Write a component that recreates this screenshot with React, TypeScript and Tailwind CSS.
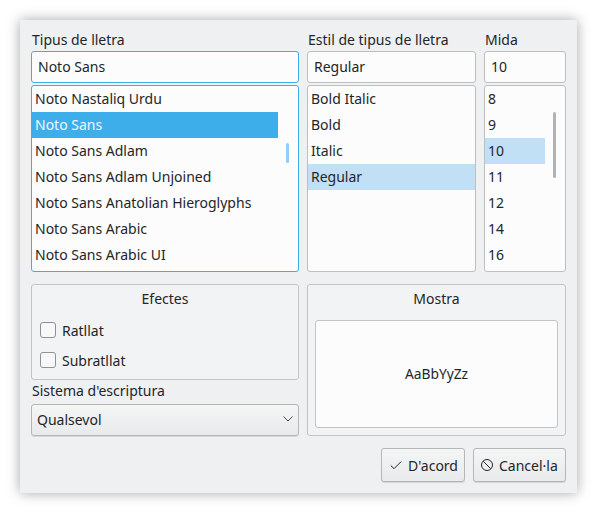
const families = [
  'Noto Nastaliq Urdu',
  'Noto Sans',
  'Noto Sans Adlam',
  'Noto Sans Adlam Unjoined',
  'Noto Sans Anatolian Hieroglyphs',
  'Noto Sans Arabic',
  'Noto Sans Arabic UI',
];
const styles = ['Bold Italic', 'Bold', 'Italic', 'Regular'];
const sizes = ['8', '9', '10', '11', '12', '14', '16'];

const ListRow = ({ text, active, current }: { text: string; active?: boolean; current?: boolean }) => (
  <div
    className={`h-[26px] pl-[3px] leading-[26px] whitespace-nowrap ${
      active ? 'bg-[#3daee9] text-[#eff8fd]' : current ? 'bg-[#c2e0f5]' : ''
    }`}
  >
    {text}
  </div>
);

const Input = ({ value, focused, pad }: { value: string; focused?: boolean; pad: string }) => (
  <div
    className={`h-[32px] rounded-[3px] border bg-[#fcfcfc] leading-[30px] ${pad} ${
      focused ? 'border-[#3daee9]' : 'border-[#bcbebf]'
    }`}
  >
    {value}
  </div>
);

const Check = ({ label }: { label: string }) => (
  <div className="flex h-[30px] items-center gap-[6px]">
    <div className="h-[16px] w-[16px] rounded-[3px] border border-[#8f9192] bg-[#f8f8f9]" />
    <span>{label}</span>
  </div>
);

export default function App() {
  return (
    <div className="h-[513px] w-[597px] bg-white pl-[20px] pt-[20px] font-['Noto_Sans',sans-serif] text-[14px] text-[#232629]">
      <div className="h-[473px] w-[557px] bg-[#eff0f1] px-[11px] pt-[11px] shadow-[0_0_12px_rgba(0,0,0,0.35)]">
        <div className="flex gap-[8px]">
          <div className="w-[268px]">
            <div className="h-[20px] pl-[1px] leading-[18px]">Tipus de lletra</div>
            <Input value="Noto Sans" focused pad="pl-[6px]" />
            <div className="mt-[2px] flex h-[187px] rounded-[3px] border border-[#3daee9] bg-[#fcfcfc]">
              <div className="w-[246px]">
                {families.map(f => (
                  <ListRow key={f} text={f} active={f === 'Noto Sans'} />
                ))}
              </div>
              <div className="pl-[8px] pt-[57px]">
                <div className="h-[20px] w-[3px] rounded-full bg-[#93cef4]" />
              </div>
            </div>
          </div>

          <div className="w-[169px]">
            <div className="h-[20px] pl-[1px] leading-[18px]">Estil de tipus de lletra</div>
            <Input value="Regular" pad="pl-[6px]" />
            <div className="mt-[2px] h-[187px] rounded-[3px] border border-[#bcbebf] bg-[#fcfcfc]">
              {styles.map(s => (
                <ListRow key={s} text={s} current={s === 'Regular'} />
              ))}
            </div>
          </div>

          <div className="w-[82px]">
            <div className="h-[20px] pl-[1px] leading-[18px]">Mida</div>
            <Input value="10" pad="pl-[6px]" />
            <div className="mt-[2px] flex h-[187px] rounded-[3px] border border-[#bcbebf] bg-[#fcfcfc]">
              <div className="w-[60px]">
                {sizes.map(s => (
                  <ListRow key={s} text={s} current={s === '10'} />
                ))}
              </div>
              <div className="pl-[8px] pt-[26px]">
                <div className="h-[66px] w-[3px] rounded-full bg-[#b0b2b3]" />
              </div>
            </div>
          </div>
        </div>

        <div className="mt-[12px] flex gap-[8px]">
          <div className="w-[268px]">
            <div className="h-[96px] rounded-[3px] border border-[#c2c4c5] bg-[#f2f3f4] px-[8px]">
              <div className="h-[30px] text-center leading-[28px]">Efectes</div>
              <Check label="Ratllat" />
              <Check label="Subratllat" />
            </div>
            <div className="h-[24px] pl-[1px] leading-[21px]">Sistema d'escriptura</div>
            <div className="flex h-[32px] items-center justify-between rounded-[3px] border border-[#b4b6b7] bg-gradient-to-b from-[#f4f5f5] to-[#e9eaeb] pb-[2px] pl-[5px] pr-[5px] shadow-[0_1px_0_rgba(0,0,0,0.1)]">
              <span>Qualsevol</span>
              <svg width="10" height="6" viewBox="0 0 10 6" fill="none" stroke="#4d4d4d" strokeWidth="1">
                <path d="M0.5 0.5 5 5 9.5 0.5" />
              </svg>
            </div>
          </div>

          <div className="h-[152px] w-[259px] rounded-[3px] border border-[#c2c4c5] bg-[#f2f3f4] px-[7px]">
            <div className="h-[35px] text-center leading-[28px]">Mostra</div>
            <div className="flex h-[108px] items-center justify-center rounded-[3px] border border-[#c2c4c5] bg-[#fcfcfc] pt-[1px] text-[13.8px]">
              AaBbYyZz
            </div>
          </div>
        </div>

        <div className="mt-[12px] flex justify-end gap-[8px]">
          <div className="flex h-[34px] w-[84px] items-center gap-[6px] rounded-[3px] border border-[#b4b6b7] bg-gradient-to-b from-[#f4f5f5] to-[#e9eaeb] pl-[8px] shadow-[0_1px_0_rgba(0,0,0,0.1)]">
            <svg width="12" height="12" viewBox="0 0 12 12" fill="none" stroke="#232629" strokeWidth="1">
              <path d="M0.8 6.5 4 9.7 11.2 2.5" />
            </svg>
            <span>D'acord</span>
          </div>
          <div className="flex h-[34px] w-[93px] items-center gap-[6px] rounded-[3px] border border-[#b4b6b7] bg-gradient-to-b from-[#f4f5f5] to-[#e9eaeb] pl-[7px] shadow-[0_1px_0_rgba(0,0,0,0.1)]">
            <svg width="12" height="12" viewBox="0 0 12 12" fill="none" stroke="#232629" strokeWidth="1">
              <circle cx="6" cy="6" r="5.5" />
              <path d="M2.2 2.2 9.8 9.8" />
            </svg>
            <span>Cancel·la</span>
          </div>
        </div>
      </div>
    </div>
  );
}
